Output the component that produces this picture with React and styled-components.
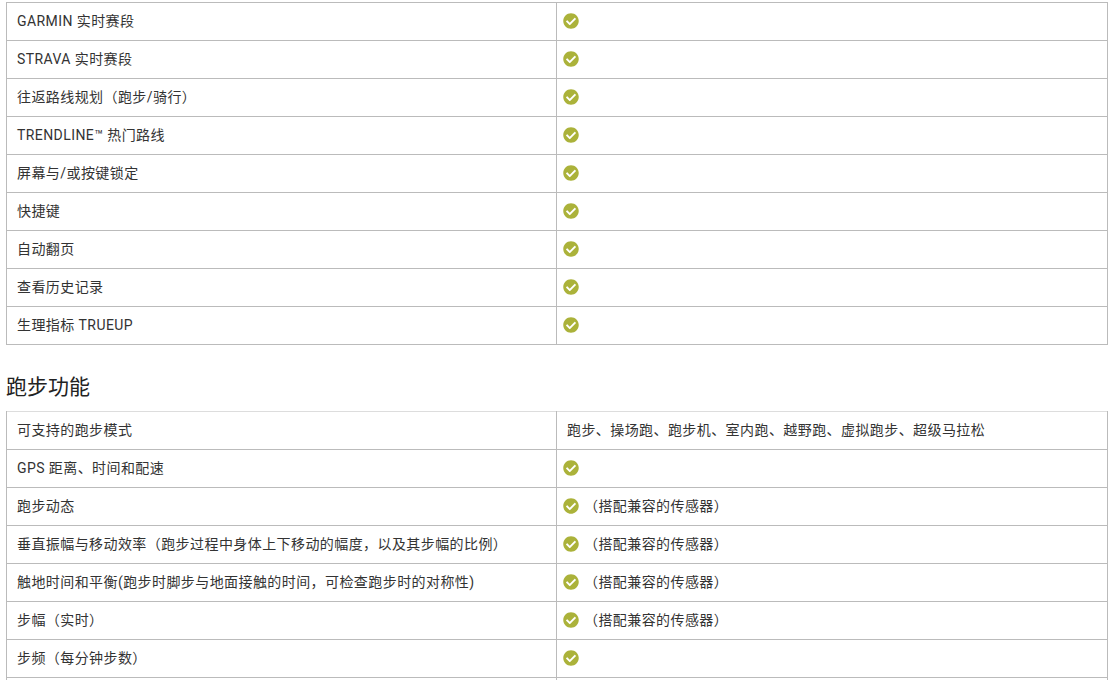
import React from 'react';
import styled, { createGlobalStyle } from 'styled-components';
import { FaCheckCircle } from 'react-icons/fa';

const GlobalStyle = createGlobalStyle`
    html, body {
        margin: 0;
        padding: 0;
        background: #fff;
        overflow: hidden;
        height: 680px;
    }
`;

const Page = styled.div`
    padding: 2px 7px 0 6px;
    font-family: Roboto, "Noto Sans CJK SC", sans-serif;
    color: #333;
`;

const SpecTable = styled.table`
    width: 1102px;
    table-layout: fixed;
    border-collapse: collapse;
    font-size: 14px;
    letter-spacing: 0.42px;
`;

const Row = styled.tr`
    height: 38px;
    border-top: 1px solid ${props => (props.$first ? '#ddd' : '#bbb')};
    border-bottom: 1px solid #bbb;
`;

const Cell = styled.td`
    box-sizing: border-box;
    width: ${props => props.$width || 'auto'};
    padding: 0 10px 2px;
    border-left: 1px solid #bbb;
    border-right: 1px solid #bbb;
    vertical-align: middle;
    line-height: 20px;
`;

const CheckLine = styled.div`
    display: flex;
    align-items: center;
    gap: 5px;
    height: 20px;
    margin-left: -4px;
`;

const Check = styled(FaCheckCircle)`
    width: 16px;
    height: 16px;
    color: #abb23a;
    flex: none;
`;

const SectionTitle = styled.h2`
    margin: 0;
    padding: 30px 0 12px;
    font-size: 21px;
    line-height: 24px;
    font-weight: 400;
    letter-spacing: 0;
    color: #222;
`;

const trainingRows = [
    'GARMIN 实时赛段',
    'STRAVA 实时赛段',
    '往返路线规划（跑步/骑行）',
    'TRENDLINE™ 热门路线',
    '屏幕与/或按键锁定',
    '快捷键',
    '自动翻页',
    '查看历史记录',
    '生理指标 TRUEUP',
];

const SENSOR = '（搭配兼容的传感器）';

const runningRows = [
    ['GPS 距离、时间和配速'],
    ['跑步动态', SENSOR],
    ['垂直振幅与移动效率（跑步过程中身体上下移动的幅度，以及其步幅的比例）', SENSOR],
    ['触地时间和平衡(跑步时脚步与地面接触的时间，可检查跑步时的对称性)', SENSOR],
    ['步幅（实时）', SENSOR],
    ['步频（每分钟步数）'],
];

function FeatureRow({ label, note }) {
    return (
        <Row>
            <Cell $width="550px">{label}</Cell>
            <Cell>
                <CheckLine>
                    <Check />
                    {note && <span>{note}</span>}
                </CheckLine>
            </Cell>
        </Row>
    );
}

export default function App() {
    return (
        <Page>
            <GlobalStyle />
            <SpecTable>
                <tbody>
                    {trainingRows.map(label => (
                        <FeatureRow key={label} label={label} />
                    ))}
                </tbody>
            </SpecTable>

            <SectionTitle>跑步功能</SectionTitle>

            <SpecTable>
                <tbody>
                    <Row $first>
                        <Cell $width="550px">可支持的跑步模式</Cell>
                        <Cell>跑步、操场跑、跑步机、室内跑、越野跑、虚拟跑步、超级马拉松</Cell>
                    </Row>
                    {runningRows.map(([label, note]) => (
                        <FeatureRow key={label} label={label} note={note} />
                    ))}
                    <Row>
                        <Cell $width="550px">&nbsp;</Cell>
                        <Cell>&nbsp;</Cell>
                    </Row>
                </tbody>
            </SpecTable>
        </Page>
    );
}
